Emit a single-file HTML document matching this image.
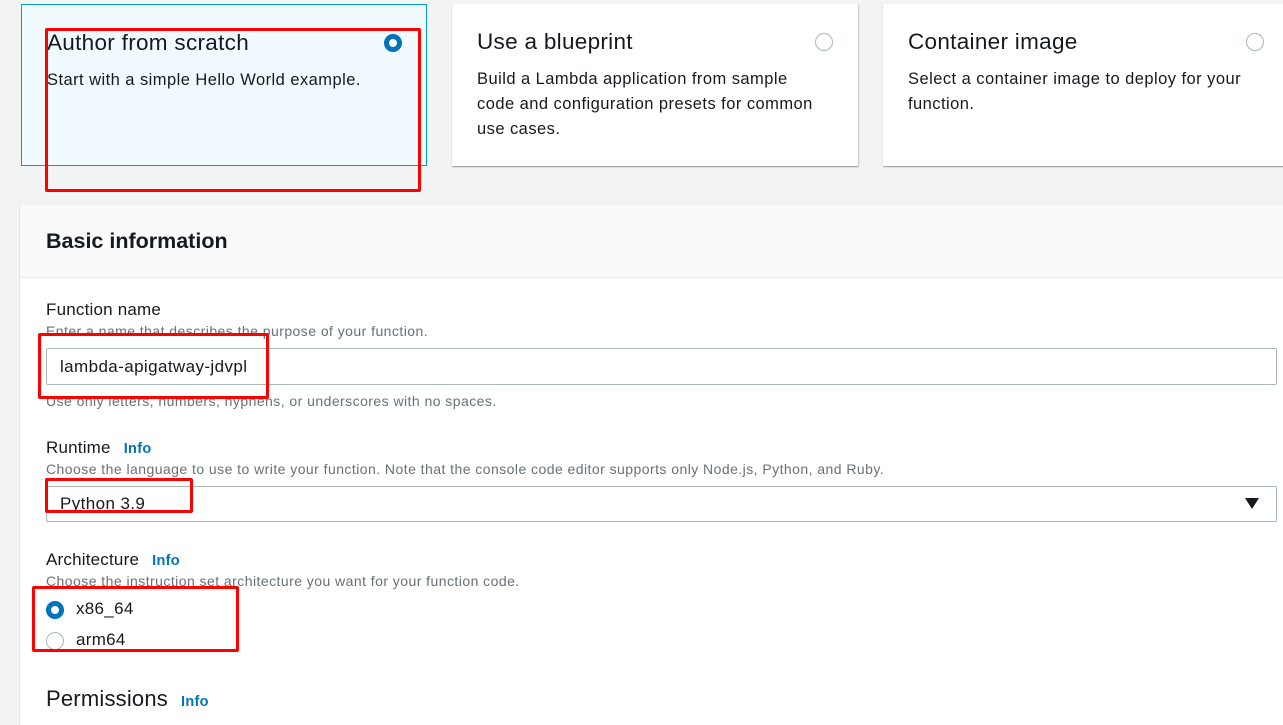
<!DOCTYPE html>
<html><head><meta charset="utf-8">
<style>
*{box-sizing:border-box;margin:0;padding:0}
body{width:1283px;height:713px;overflow:hidden;background:#f2f3f3;font-family:"Liberation Sans",sans-serif;color:#16191f;position:relative}
.abs{position:absolute}
.card{position:absolute;top:4px;height:162px;background:#fff;box-shadow:0 1px 1px rgba(0,28,36,.3),1px 1px 1px rgba(0,28,36,.15)}
.card h3{position:absolute;left:25px;top:25px;font-size:22.5px;letter-spacing:.3px;font-weight:normal;white-space:nowrap}
.card p{position:absolute;left:25px;top:63px;font-size:16.5px;letter-spacing:.45px;line-height:25px;white-space:nowrap}
.radio{position:absolute;width:18px;height:18px;border-radius:50%;border:1.5px solid #aab7b8;background:#fff}
.radio.on{border:5px solid #0073bb}
.red{position:absolute;border:3px solid #f00;border-radius:2px}
.lbl{position:absolute;left:46px;font-size:17px;letter-spacing:.2px}
.hint{position:absolute;left:46px;font-size:14px;letter-spacing:.45px;color:#687078;white-space:nowrap}
.info{color:#0073bb;font-weight:bold;font-size:14.5px;margin-left:13px;letter-spacing:.3px}
.inp{position:absolute;left:46px;width:1231px;border:1px solid #aab7b8;border-radius:2px;background:#fff;font-size:17px;letter-spacing:.4px;padding-left:13px}
</style></head><body>
<div class="card" style="left:21px;width:406px;background:#f1faff;border:1px solid #00a1c9;box-shadow:none">
<h3 style="left:25px">Author from scratch</h3><p>Start with a simple Hello World example.</p>
<div class="radio on" style="left:362px;top:29px"></div></div>
<div class="card" style="left:452px;width:406px">
<h3>Use a blueprint</h3><p>Build a Lambda application from sample<br>code and configuration presets for common<br>use cases.</p>
<div class="radio" style="left:363px;top:29px"></div></div>
<div class="card" style="left:883px;width:420px">
<h3>Container image</h3><p>Select a container image to deploy for your<br>function.</p>
<div class="radio" style="left:363px;top:29px"></div></div>

<div class="abs" style="left:20px;top:205px;width:1270px;height:520px;background:#fff;box-shadow:0 1px 1px rgba(0,28,36,.3)">
<div style="height:73px;background:#fafafa;border-bottom:1px solid #eaeded"></div></div>
<div class="abs" style="left:46px;top:229px;font-size:21.5px;font-weight:bold">Basic information</div>

<div class="lbl" style="top:300px">Function name</div>
<div class="hint" style="top:323px">Enter a name that describes the purpose of your function.</div>
<div class="inp" style="top:348px;height:37px;line-height:35px">lambda-apigatway-jdvpl</div>
<div class="hint" style="top:393px">Use only letters, numbers, hyphens, or underscores with no spaces.</div>

<div class="lbl" style="top:438px">Runtime<span class="info">Info</span></div>
<div class="hint" style="top:461px">Choose the language to use to write your function. Note that the console code editor supports only Node.js, Python, and Ruby.</div>
<div class="inp" style="top:486px;height:36px;line-height:34px">Python 3.9</div>
<svg class="abs" style="left:1245px;top:498px" width="14" height="12"><path d="M0 0H14L7 11Z" fill="#16191f"/></svg>

<div class="lbl" style="top:550px">Architecture<span class="info">Info</span></div>
<div class="hint" style="top:573px">Choose the instruction set architecture you want for your function code.</div>
<div class="radio on" style="left:46px;top:601px"></div>
<div class="abs" style="left:76px;top:599px;font-size:17px;letter-spacing:.3px">x86_64</div>
<div class="radio" style="left:46px;top:632px"></div>
<div class="abs" style="left:76px;top:630px;font-size:17px;letter-spacing:.3px">arm64</div>

<div class="abs" style="left:46px;top:686px;font-size:22px;letter-spacing:.2px">Permissions<span class="info">Info</span></div>

<div class="red" style="left:45px;top:28px;width:376px;height:164px"></div>
<div class="red" style="left:38px;top:333px;width:231px;height:66px"></div>
<div class="red" style="left:45px;top:478px;width:148px;height:35px"></div>
<div class="red" style="left:32px;top:586px;width:207px;height:66px"></div>
</body></html>
